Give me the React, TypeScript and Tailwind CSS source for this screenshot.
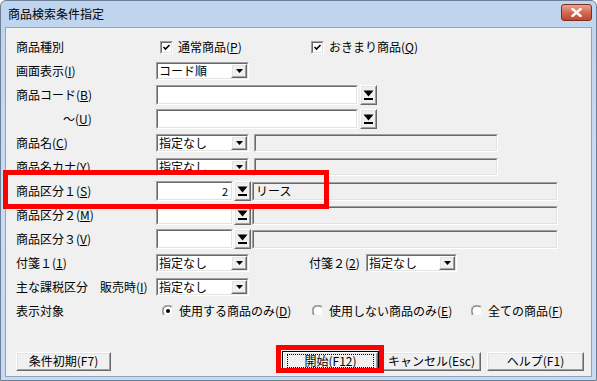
import React from "react";

const Sunken = ({ className = "", bg = "bg-white", children }: { className?: string; bg?: string; children?: React.ReactNode }) => (
  <div className={`border border-t-[#a0a0a0] border-l-[#a0a0a0] border-b-white border-r-white ${className}`}>
    <div className={`h-full w-full border border-t-[#696969] border-l-[#696969] border-b-[#e3e3e3] border-r-[#e3e3e3] ${bg} flex items-center overflow-hidden`}>
      {children}
    </div>
  </div>
);

const Raised = ({ className = "", children }: { className?: string; children?: React.ReactNode }) => (
  <div className={`border border-t-white border-l-white border-b-[#696969] border-r-[#696969] ${className}`}>
    <div className="h-full w-full border border-t-[#e3e3e3] border-l-[#e3e3e3] border-b-[#a0a0a0] border-r-[#a0a0a0] bg-[#f0f0f0] flex items-center justify-center">
      {children}
    </div>
  </div>
);

const SmallArrow = () => (
  <svg width="7" height="4" viewBox="0 0 7 4">
    <path d="M0 0H7L3.5 4Z" fill="#000" />
  </svg>
);

const EllipsisIcon = () => (
  <svg width="11" height="11" viewBox="0 0 11 11">
    <path d="M0.5 0.5H10.5L5.5 6.5Z" fill="#000" />
    <rect x="1" y="8" width="9" height="2" fill="#000" />
  </svg>
);

const Select = ({ value, w = "w-[93px]" }: { value: string; w?: string }) => (
  <Sunken className={`${w} h-[18px]`}>
    <span className="flex-1 pl-[1px] leading-[14px] whitespace-nowrap">{value}</span>
    <Raised className="w-[16px] h-[14px]">
      <SmallArrow />
    </Raised>
  </Sunken>
);

const EllipsisBtn = () => (
  <Raised className="w-[17px] h-[20px]">
    <EllipsisIcon />
  </Raised>
);

const Checkbox = () => (
  <Sunken className="w-[13px] h-[13px]">
    <svg width="9" height="9" viewBox="0 0 9 9">
      <path d="M1.5 4L3.5 6L7.5 2" stroke="#000" strokeWidth="1.6" fill="none" />
    </svg>
  </Sunken>
);

const Radio = ({ checked }: { checked?: boolean }) => (
  <svg width="12" height="12" viewBox="0 0 12 12">
    <circle cx="6" cy="6" r="5.5" fill="#fff" />
    <path d="M1.6 10.4A6 6 0 0 1 10.4 1.6" stroke="#a0a0a0" strokeWidth="1" fill="none" />
    <path d="M2.4 9.6A5 5 0 0 1 9.6 2.4" stroke="#696969" strokeWidth="1" fill="none" />
    <path d="M10.4 1.6A6 6 0 0 1 1.6 10.4" stroke="#ffffff" strokeWidth="1" fill="none" />
    <path d="M9.6 2.4A5 5 0 0 1 2.4 9.6" stroke="#e3e3e3" strokeWidth="1" fill="none" />
    {checked && <circle cx="6" cy="6" r="2" fill="#000" />}
  </svg>
);

const Row = ({ label, children }: { label: React.ReactNode; children?: React.ReactNode }) => (
  <div className="h-[24px] flex items-center">
    <div className="w-[140px] shrink-0 whitespace-nowrap">{label}</div>
    {children}
  </div>
);

const Btn = ({ children, className = "" }: { children: React.ReactNode; className?: string }) => (
  <Raised className={`h-[19px] ${className}`}>
    <span className="leading-[14px] whitespace-nowrap">{children}</span>
  </Raised>
);

export default function App() {
  return (
    <div className="w-[597px] h-[381px] relative overflow-hidden font-['Noto_Sans_CJK_JP',sans-serif] text-[12px] text-black">
      <div className="w-full h-full flex flex-col border border-[#6e7f95] rounded-t-[6px] bg-gradient-to-b from-[#bfd4ee] via-[#cadcf2] to-[#c6daf1]">
        <div className="h-[26px] shrink-0 flex items-center justify-between pl-[7px] pr-[4px]">
          <span className="leading-[14px] mt-[-1px]">商品検索条件指定</span>
          <div className="w-[31px] h-[17px] mt-[-4px] rounded-[3px] border border-[#7b2f23] bg-gradient-to-b from-[#e9a494] via-[#d36a55] to-[#c2462e] flex items-center justify-center">
            <svg width="11" height="9" viewBox="0 0 11 9">
              <path d="M1.5 1L9.5 8M9.5 1L1.5 8" stroke="#fff" strokeWidth="2.4" strokeLinecap="square" />
            </svg>
          </div>
        </div>
        <div className="flex-1 mx-[4px] mb-[3px] border border-[#8da5c4] bg-[#f0f0f0] pl-[10px] pt-[7px]">
          <Row label="商品種別">
            <div className="flex items-center ml-[4px] w-[151px]">
              <Checkbox />
              <span className="ml-[5px]">通常商品(<u>P</u>)</span>
            </div>
            <div className="flex items-center">
              <Checkbox />
              <span className="ml-[5px]">おきまり商品(<u>Q</u>)</span>
            </div>
          </Row>
          <Row label={<>画面表示(<u>I</u>)</>}>
            <Select value="コード順" />
          </Row>
          <Row label={<>商品コード(<u>B</u>)</>}>
            <Sunken className="w-[202px] h-[20px]" />
            <div className="ml-[2px]"><EllipsisBtn /></div>
          </Row>
          <Row label={<span className="pl-[47px]">～(<u>U</u>)</span>}>
            <Sunken className="w-[202px] h-[20px]" />
            <div className="ml-[2px]"><EllipsisBtn /></div>
          </Row>
          <Row label={<>商品名(<u>C</u>)</>}>
            <Select value="指定なし" />
            <Sunken className="ml-[5px] w-[244px] h-[18px]" bg="bg-[#f0f0f0]" />
          </Row>
          <Row label={<>商品名カナ(<u>Y</u>)</>}>
            <Select value="指定なし" />
            <Sunken className="ml-[5px] w-[244px] h-[18px]" bg="bg-[#f0f0f0]" />
          </Row>
          <Row label={<>商品区分１(<u>S</u>)</>}>
            <Sunken className="w-[77px] h-[20px]">
              <span className="flex-1 text-right pr-[3px] text-[11px] leading-[14px]">2</span>
            </Sunken>
            <div className="ml-[1px]"><EllipsisBtn /></div>
            <Sunken className="ml-[1px] w-[306px] h-[19px]" bg="bg-[#f0f0f0]">
              <span className="pl-[2px] leading-[14px]">リース</span>
            </Sunken>
          </Row>
          <Row label={<>商品区分２(<u>M</u>)</>}>
            <Sunken className="w-[77px] h-[20px]" />
            <div className="ml-[1px]"><EllipsisBtn /></div>
            <Sunken className="ml-[1px] w-[306px] h-[19px]" bg="bg-[#f0f0f0]" />
          </Row>
          <Row label={<>商品区分３(<u>V</u>)</>}>
            <Sunken className="w-[77px] h-[20px]" />
            <div className="ml-[1px]"><EllipsisBtn /></div>
            <Sunken className="ml-[1px] w-[306px] h-[19px]" bg="bg-[#f0f0f0]" />
          </Row>
          <Row label={<>付箋１(<u>1</u>)</>}>
            <Select value="指定なし" />
            <span className="ml-[60px] w-[57px] whitespace-nowrap">付箋２(<u>2</u>)</span>
            <Select value="指定なし" w="w-[91px]" />
          </Row>
          <Row label={<>主な課税区分<span className="ml-[12px]">販売時(<u>I</u>)</span></>}>
            <Select value="指定なし" />
          </Row>
          <Row label="表示対象">
            <div className="flex items-center ml-[6px] w-[150px]">
              <Radio checked />
              <span className="ml-[5px]">使用する商品のみ(<u>D</u>)</span>
            </div>
            <div className="flex items-center w-[159px]">
              <Radio />
              <span className="ml-[5px]">使用しない商品のみ(<u>E</u>)</span>
            </div>
            <div className="flex items-center">
              <Radio />
              <span className="ml-[5px]">全ての商品(<u>F</u>)</span>
            </div>
          </Row>
          <div className="flex items-center mt-[28px]">
            <Btn className="w-[95px]">条件初期(F7)</Btn>
            <div className="ml-[171px] border border-black">
              <Raised className="w-[95px] h-[18px]">
                <span className="flex-1 mx-[2px] text-center leading-[12px] border border-dotted border-black whitespace-nowrap">開始(F12)</span>
              </Raised>
            </div>
            <Btn className="ml-[3px] w-[99px]">キャンセル(Esc)</Btn>
            <Btn className="ml-[6px] w-[97px]">ヘルプ(F1)</Btn>
          </div>
        </div>
      </div>
      <div className="absolute left-[3px] top-[170px] w-[326px] h-[39px] border-[5px] border-[#ff0000]" />
      <div className="absolute left-[276px] top-[345px] w-[108px] h-[28px] border-[5px] border-[#ff0000]" />
    </div>
  );
}
